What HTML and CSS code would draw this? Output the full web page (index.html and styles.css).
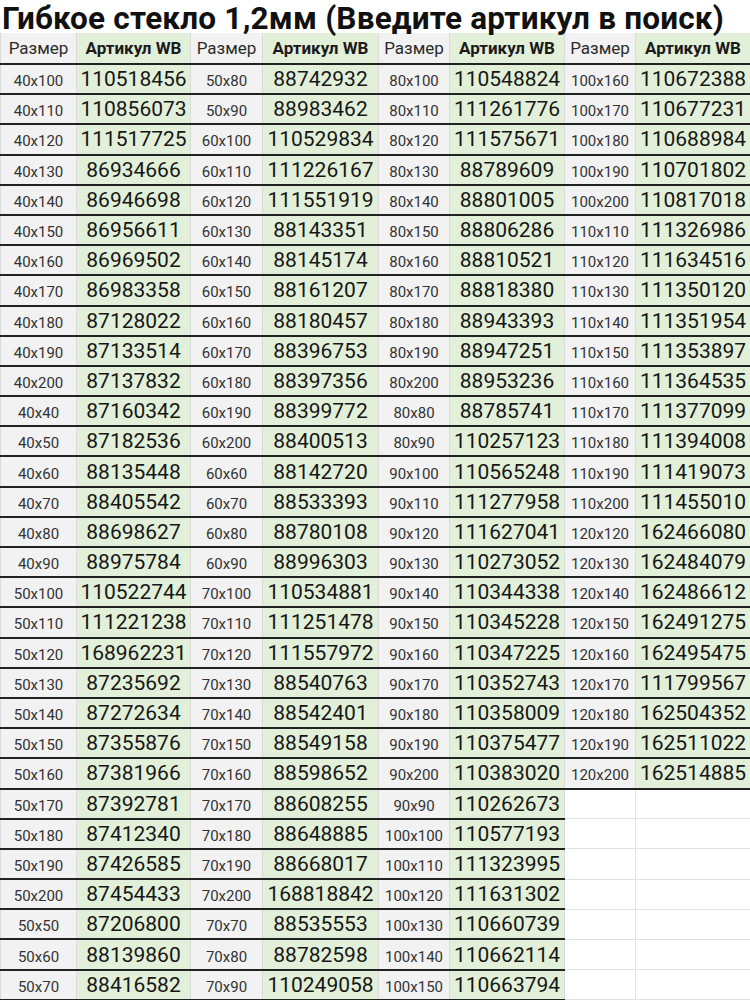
FILE: index.html
```html
<!DOCTYPE html>
<html lang="ru">
<head>
<meta charset="utf-8">
<title>Гибкое стекло 1,2мм</title>
<link rel="stylesheet" href="styles.css">
</head>
<body>
<div class="sheet">
<h1 class="title">Гибкое стекло 1,2мм (Введите артикул в поиск)</h1>
<table class="grid">
<colgroup><col class="c-s1"><col class="c-a1"><col class="c-s2"><col class="c-a2"><col class="c-s3"><col class="c-a3"><col class="c-s4"><col class="c-a4"></colgroup>
<thead>
<tr class="head"><td class="hs">Размер</td><td class="ha">Артикул WB</td><td class="hs">Размер</td><td class="ha">Артикул WB</td><td class="hs">Размер</td><td class="ha">Артикул WB</td><td class="hs">Размер</td><td class="ha">Артикул WB</td></tr>
</thead>
<tbody>
<tr><td class="s">40x100</td><td class="a">110518456</td><td class="s">50x80</td><td class="a">88742932</td><td class="s">80x100</td><td class="a">110548824</td><td class="s">100x160</td><td class="a">110672388</td></tr>
<tr><td class="s">40x110</td><td class="a">110856073</td><td class="s">50x90</td><td class="a">88983462</td><td class="s">80x110</td><td class="a">111261776</td><td class="s">100x170</td><td class="a">110677231</td></tr>
<tr><td class="s">40x120</td><td class="a">111517725</td><td class="s">60x100</td><td class="a">110529834</td><td class="s">80x120</td><td class="a">111575671</td><td class="s">100x180</td><td class="a">110688984</td></tr>
<tr><td class="s">40x130</td><td class="a">86934666</td><td class="s">60x110</td><td class="a">111226167</td><td class="s">80x130</td><td class="a">88789609</td><td class="s">100x190</td><td class="a">110701802</td></tr>
<tr><td class="s">40x140</td><td class="a">86946698</td><td class="s">60x120</td><td class="a">111551919</td><td class="s">80x140</td><td class="a">88801005</td><td class="s">100x200</td><td class="a">110817018</td></tr>
<tr><td class="s">40x150</td><td class="a">86956611</td><td class="s">60x130</td><td class="a">88143351</td><td class="s">80x150</td><td class="a">88806286</td><td class="s">110x110</td><td class="a">111326986</td></tr>
<tr><td class="s">40x160</td><td class="a">86969502</td><td class="s">60x140</td><td class="a">88145174</td><td class="s">80x160</td><td class="a">88810521</td><td class="s">110x120</td><td class="a">111634516</td></tr>
<tr><td class="s">40x170</td><td class="a">86983358</td><td class="s">60x150</td><td class="a">88161207</td><td class="s">80x170</td><td class="a">88818380</td><td class="s">110x130</td><td class="a">111350120</td></tr>
<tr><td class="s">40x180</td><td class="a">87128022</td><td class="s">60x160</td><td class="a">88180457</td><td class="s">80x180</td><td class="a">88943393</td><td class="s">110x140</td><td class="a">111351954</td></tr>
<tr><td class="s">40x190</td><td class="a">87133514</td><td class="s">60x170</td><td class="a">88396753</td><td class="s">80x190</td><td class="a">88947251</td><td class="s">110x150</td><td class="a">111353897</td></tr>
<tr><td class="s">40x200</td><td class="a">87137832</td><td class="s">60x180</td><td class="a">88397356</td><td class="s">80x200</td><td class="a">88953236</td><td class="s">110x160</td><td class="a">111364535</td></tr>
<tr><td class="s">40x40</td><td class="a">87160342</td><td class="s">60x190</td><td class="a">88399772</td><td class="s">80x80</td><td class="a">88785741</td><td class="s">110x170</td><td class="a">111377099</td></tr>
<tr><td class="s">40x50</td><td class="a">87182536</td><td class="s">60x200</td><td class="a">88400513</td><td class="s">80x90</td><td class="a">110257123</td><td class="s">110x180</td><td class="a">111394008</td></tr>
<tr><td class="s">40x60</td><td class="a">88135448</td><td class="s">60x60</td><td class="a">88142720</td><td class="s">90x100</td><td class="a">110565248</td><td class="s">110x190</td><td class="a">111419073</td></tr>
<tr><td class="s">40x70</td><td class="a">88405542</td><td class="s">60x70</td><td class="a">88533393</td><td class="s">90x110</td><td class="a">111277958</td><td class="s">110x200</td><td class="a">111455010</td></tr>
<tr><td class="s">40x80</td><td class="a">88698627</td><td class="s">60x80</td><td class="a">88780108</td><td class="s">90x120</td><td class="a">111627041</td><td class="s">120x120</td><td class="a">162466080</td></tr>
<tr><td class="s">40x90</td><td class="a">88975784</td><td class="s">60x90</td><td class="a">88996303</td><td class="s">90x130</td><td class="a">110273052</td><td class="s">120x130</td><td class="a">162484079</td></tr>
<tr><td class="s">50x100</td><td class="a">110522744</td><td class="s">70x100</td><td class="a">110534881</td><td class="s">90x140</td><td class="a">110344338</td><td class="s">120x140</td><td class="a">162486612</td></tr>
<tr><td class="s">50x110</td><td class="a">111221238</td><td class="s">70x110</td><td class="a">111251478</td><td class="s">90x150</td><td class="a">110345228</td><td class="s">120x150</td><td class="a">162491275</td></tr>
<tr><td class="s">50x120</td><td class="a">168962231</td><td class="s">70x120</td><td class="a">111557972</td><td class="s">90x160</td><td class="a">110347225</td><td class="s">120x160</td><td class="a">162495475</td></tr>
<tr><td class="s">50x130</td><td class="a">87235692</td><td class="s">70x130</td><td class="a">88540763</td><td class="s">90x170</td><td class="a">110352743</td><td class="s">120x170</td><td class="a">111799567</td></tr>
<tr><td class="s">50x140</td><td class="a">87272634</td><td class="s">70x140</td><td class="a">88542401</td><td class="s">90x180</td><td class="a">110358009</td><td class="s">120x180</td><td class="a">162504352</td></tr>
<tr><td class="s">50x150</td><td class="a">87355876</td><td class="s">70x150</td><td class="a">88549158</td><td class="s">90x190</td><td class="a">110375477</td><td class="s">120x190</td><td class="a">162511022</td></tr>
<tr><td class="s">50x160</td><td class="a">87381966</td><td class="s">70x160</td><td class="a">88598652</td><td class="s">90x200</td><td class="a">110383020</td><td class="s">120x200</td><td class="a">162514885</td></tr>
<tr><td class="s">50x170</td><td class="a">87392781</td><td class="s">70x170</td><td class="a">88608255</td><td class="s">90x90</td><td class="a">110262673</td><td class="e"></td><td class="e"></td></tr>
<tr><td class="s">50x180</td><td class="a">87412340</td><td class="s">70x180</td><td class="a">88648885</td><td class="s">100x100</td><td class="a">110577193</td><td class="e"></td><td class="e"></td></tr>
<tr><td class="s">50x190</td><td class="a">87426585</td><td class="s">70x190</td><td class="a">88668017</td><td class="s">100x110</td><td class="a">111323995</td><td class="e"></td><td class="e"></td></tr>
<tr><td class="s">50x200</td><td class="a">87454433</td><td class="s">70x200</td><td class="a">168818842</td><td class="s">100x120</td><td class="a">111631302</td><td class="e"></td><td class="e"></td></tr>
<tr><td class="s">50x50</td><td class="a">87206800</td><td class="s">70x70</td><td class="a">88535553</td><td class="s">100x130</td><td class="a">110660739</td><td class="e"></td><td class="e"></td></tr>
<tr><td class="s">50x60</td><td class="a">88139860</td><td class="s">70x80</td><td class="a">88782598</td><td class="s">100x140</td><td class="a">110662114</td><td class="e"></td><td class="e"></td></tr>
<tr><td class="s">50x70</td><td class="a">88416582</td><td class="s">70x90</td><td class="a">110249058</td><td class="s">100x150</td><td class="a">110663794</td><td class="e"></td><td class="e"></td></tr>
</tbody>
</table>
</div>
</body>
</html>
```
FILE: styles.css
```css
html, body {
  margin: 0;
  padding: 0;
  background: #ffffff;
}
body {
  font-family: Roboto, "Liberation Sans", Arial, sans-serif;
  color: #1a1a1a;
}
.sheet {
  width: 750px;
}
.title {
  margin: 0;
  box-sizing: border-box;
  height: 33px;
  padding: 2px 0 0 2px;
  line-height: 33px;
  font-size: 31.5px;
  letter-spacing: 0.2px;
  font-weight: 700;
  color: #111111;
  white-space: nowrap;
}
.grid {
  width: 750px;
  border-collapse: collapse;
  table-layout: fixed;
}
.c-s1 { width: 76px; }
.c-a1 { width: 114px; }
.c-s2 { width: 72px; }
.c-a2 { width: 116px; }
.c-s3 { width: 71px; }
.c-a3 { width: 115px; }
.c-s4 { width: 71px; }
.c-a4 { width: 115px; }

.grid td {
  padding: 0;
  text-align: center;
  white-space: nowrap;
  overflow: hidden;
  border-left: 1px solid #dadada;
  border-right: 1px solid #dadada;
  border-bottom: 2px solid #222222;
  line-height: 18px;
}
.grid tr {
  height: 30.2px;
}
.grid tr.head {
  height: 31px;
}
.grid td.hs {
  background: #f2f2f2;
  font-weight: 400;
  font-size: 17px;
  color: #2b2b2b;
  vertical-align: middle;
}
.grid td.ha {
  background: #e2efd9;
  font-weight: 700;
  font-size: 17px;
  color: #1a1a1a;
  vertical-align: middle;
}
.grid td.s {
  background: #f2f2f2;
  font-size: 15px;
  color: #333333;
  vertical-align: middle;
  padding-top: 4px;
}
.grid td.a {
  background: #e2efd9;
  font-size: 21px;
  color: #161616;
  vertical-align: middle;
}
.grid td.e {
  background: #ffffff;
  border-bottom: 1px solid #e2e2e2;
  border-left: 1px solid #e2e2e2;
  border-right: 1px solid #e2e2e2;
}
```
